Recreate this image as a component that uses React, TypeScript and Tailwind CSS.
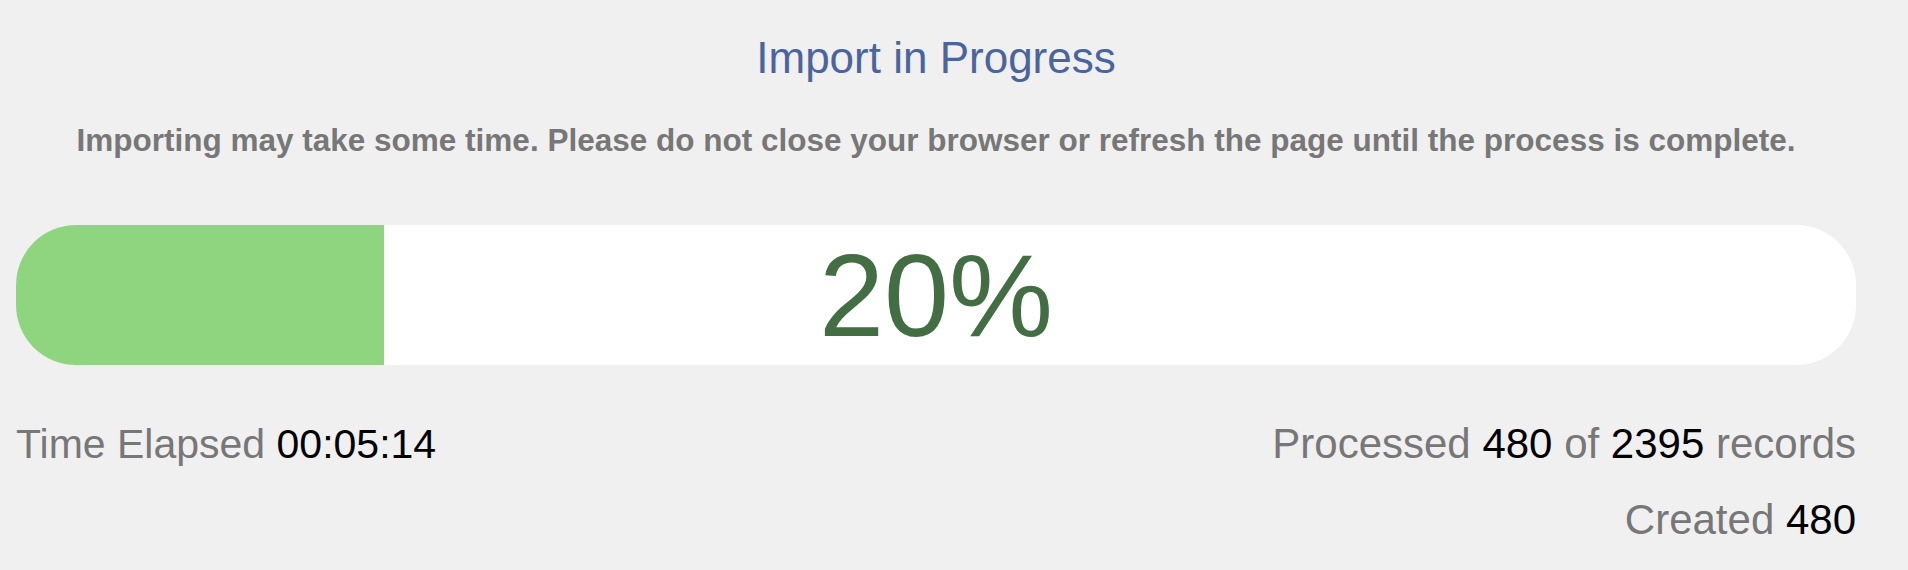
import React from 'react'

const font = { fontFamily: '"Liberation Sans", Arial, sans-serif' }

export default function App() {
  const processed = 480
  const total = 2395
  const percent = Math.round((processed / total) * 100)

  return (
    <div className="min-h-[570px] w-full bg-[#f0f0f0] pl-4 pr-[52px] pt-[30px]" style={font}>
      <h1 className="text-center text-[44px] leading-[56px] font-normal text-[#4a64a0]">Import in Progress</h1>
      <p className="mt-[35px] text-center text-[31.5px] leading-[38px] font-bold text-[#777777]">
        Importing may take some time. Please do not close your browser or refresh the page until the process is complete.
      </p>

      <div className="mt-[66px] grid h-[140px] overflow-hidden rounded-[60px] bg-white">
        <div className="[grid-area:1/1] h-full bg-[#8fd580]" style={{ width: `${percent}%` }} />
        <div className="[grid-area:1/1] flex items-center justify-center text-[117px] leading-none text-[#436e43]">
          {percent}%
        </div>
      </div>

      <div className="mt-[55px] flex items-start justify-between leading-[48px] text-[#777777]">
        <div className="text-[41px]">
          Time Elapsed <span className="text-black">00:05:14</span>
        </div>
        <div className="flex flex-col items-end gap-[28px] text-[42px]">
          <div>
            Processed <span className="text-black">{processed}</span> of <span className="text-black">{total}</span> records
          </div>
          <div>
            Created <span className="text-black">{processed}</span>
          </div>
        </div>
      </div>
    </div>
  )
}
